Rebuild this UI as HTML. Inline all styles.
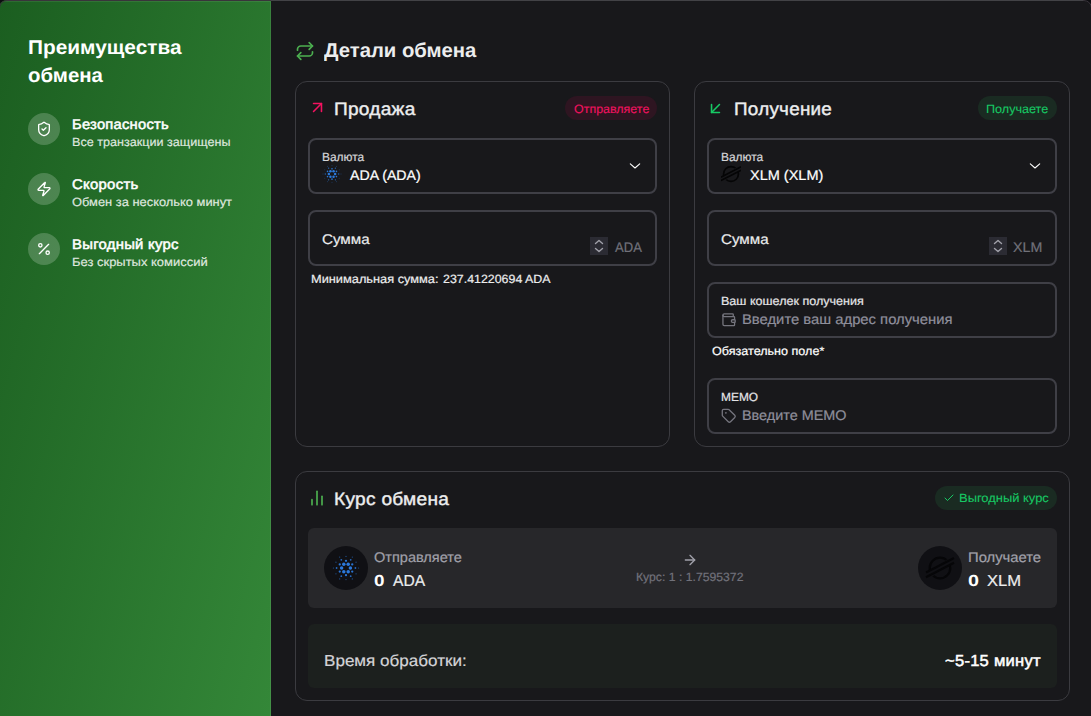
<!DOCTYPE html>
<html lang="ru">
<head>
<meta charset="utf-8">
<title>Детали обмена</title>
<style>
*{box-sizing:border-box;margin:0;padding:0}
html,body{width:1091px;height:716px;overflow:hidden;background:#0d0d10}
body{font-family:"Liberation Sans",sans-serif;color:#ecedee;position:relative;-webkit-font-smoothing:antialiased}
.abs{position:absolute}
.t{position:absolute;white-space:nowrap;line-height:1;transform-origin:0 0;text-rendering:geometricPrecision}
#frame{position:absolute;left:0;top:0;width:1091px;height:1000px;overflow:hidden;background:#18181b;clip-path:inset(0 -1px 0 -1px round 8px)}
#topline{position:absolute;left:-1px;top:0;width:1093px;height:1000px;border:1px solid #39343b;border-radius:8px;pointer-events:none}
#sidehl{position:absolute;left:0;top:1px;width:271px;height:1000px;border-top:1px solid rgba(255,255,255,.08);border-right:1px solid rgba(255,255,255,.07);pointer-events:none}
#mainline{position:absolute;left:271px;top:0;width:812px;height:1px;background:#424246}
#side{position:absolute;left:0;top:0;width:271px;height:1000px;background:linear-gradient(to bottom right,#1b5e20 0%,#388e3c 100%)}
.ic{position:absolute;width:32px;height:32px;border-radius:50%;background:rgba(255,255,255,.2)}
.ic svg{position:absolute;left:8px;top:8px;width:16px;height:16px}
.card{position:absolute;border:1px solid #3b3b40;border-radius:12px;background:#18181b}
.fld{position:absolute;border:2px solid #3f3f46;border-radius:8px;background:transparent}
.badge{position:absolute;height:24px;border-radius:12px}
.box{position:absolute;border-radius:6px}
.coin{position:absolute;width:44px;height:44px;border-radius:50%;background:#101014}
svg{display:block}
</style>
</head>
<body>
<div id="frame">
<div id="side">
  <div class="t" id="s_t1" style="left:28.36px;top:38.27px;font-size:20px;font-weight:700;color:#fff;transform:scaleX(1.0411)">Преимущества</div>
  <div class="t" id="s_t2" style="left:28.40px;top:66.07px;font-size:20px;font-weight:700;color:#fff;transform:scaleX(1.0207)">обмена</div>

  <div class="ic" style="left:28px;top:113px"><svg viewBox="0 0 24 24" fill="none" stroke="#fff" stroke-width="2" stroke-linecap="round" stroke-linejoin="round"><path d="M20 13c0 5-3.500 7.500-7.660 8.950a1 1 0 0 1-.670-.010C7.500 20.500 4 18 4 13V6a1 1 0 0 1 1-1c2 0 4.500-1.200 6.240-2.720a1.170 1.170 0 0 1 1.520 0C14.510 3.810 17 5 19 5a1 1 0 0 1 1 1z"/><path d="m9 12 2 2 4-4"/></svg></div>
  <div class="t" id="s_a1" style="left:72.40px;top:116.75px;font-size:14px;font-weight:400;letter-spacing:.25px;-webkit-text-stroke:0.5px #fff;color:#fff;transform:scaleX(1.0509)">Безопасность</div>
  <div class="t" id="s_a2" style="left:72.40px;top:135.84px;font-size:12px;color:rgba(255,255,255,.82);-webkit-text-stroke:0.2px currentColor;transform:scaleX(1.0497)">Все транзакции защищены</div>

  <div class="ic" style="left:28px;top:173px"><svg viewBox="0 0 24 24" fill="none" stroke="#fff" stroke-width="2" stroke-linecap="round" stroke-linejoin="round"><path d="M4 14a1 1 0 0 1-.780-1.630l9.900-10.200a.5.500 0 0 1 .860.460l-1.920 6.020A1 1 0 0 0 13 10h7a1 1 0 0 1 .780 1.630l-9.900 10.200a.5.500 0 0 1-.860-.460l1.920-6.020A1 1 0 0 0 11 14z"/></svg></div>
  <div class="t" id="s_b1" style="left:72.40px;top:176.75px;font-size:14px;font-weight:400;letter-spacing:.25px;-webkit-text-stroke:0.5px #fff;color:#fff;transform:scaleX(1.0649)">Скорость</div>
  <div class="t" id="s_b2" style="left:72.40px;top:195.84px;font-size:12px;color:rgba(255,255,255,.82);-webkit-text-stroke:0.2px currentColor;transform:scaleX(1.0728)">Обмен за несколько минут</div>

  <div class="ic" style="left:28px;top:233px"><svg viewBox="0 0 24 24" fill="none" stroke="#fff" stroke-width="2" stroke-linecap="round" stroke-linejoin="round"><line x1="19" y1="5" x2="5" y2="19"/><circle cx="6.500" cy="6.500" r="2.500"/><circle cx="17.500" cy="17.500" r="2.500"/></svg></div>
  <div class="t" id="s_c1" style="left:72.40px;top:236.75px;font-size:14px;font-weight:400;letter-spacing:.25px;-webkit-text-stroke:0.5px #fff;color:#fff;transform:scaleX(1.0624)">Выгодный курс</div>
  <div class="t" id="s_c2" style="left:72.40px;top:255.84px;font-size:12px;color:rgba(255,255,255,.82);-webkit-text-stroke:0.2px currentColor;transform:scaleX(1.0804)">Без скрытых комиссий</div>
</div>

<!-- header -->
<svg class="abs" style="left:295px;top:41px;width:20px;height:20px" viewBox="0 0 24 24" fill="none" stroke="#4caf50" stroke-width="2" stroke-linecap="round" stroke-linejoin="round"><path d="m17 2 4 4-4 4"/><path d="M3 11v-1a4 4 0 0 1 4-4h14"/><path d="m7 22-4-4 4-4"/><path d="M21 13v1a4 4 0 0 1-4 4H3"/></svg>
<div class="t" id="h_t" style="left:324.00px;top:40.57px;font-size:20px;font-weight:700;color:#ecedee;transform:scaleX(1.0143)">Детали обмена</div>

<!-- CARD 1 -->
<div class="card" style="left:295px;top:81px;width:375px;height:366px"></div>
<svg class="abs" style="left:307.75px;top:98.4px;width:19px;height:19px" viewBox="0 0 24 24" fill="none" stroke="#f31260" stroke-width="2" stroke-linecap="round" stroke-linejoin="round"><path d="M7 7h10v10"/><path d="M7 17 17 7"/></svg>
<div class="t" id="c1_t" style="left:334.42px;top:99.96px;font-size:18px;font-weight:400;letter-spacing:.25px;-webkit-text-stroke:0.4px #ecedee;color:#ecedee;transform:scaleX(1.0602)">Продажа</div>
<div class="badge" style="left:565px;top:96px;width:92px;background:#2e1521"></div>
<div class="t" id="c1_b" style="left:573.70px;top:102.74px;font-size:12px;color:#f31260;-webkit-text-stroke:0.1px currentColor;transform:scaleX(1.0375)">Отправляете</div>

<div class="fld" style="left:308px;top:138px;width:349px;height:56px"></div>
<div class="t" id="c1_l" style="left:322.30px;top:150.84px;font-size:12px;color:#d4d4d8;-webkit-text-stroke:0.2px currentColor;transform:scaleX(0.9942)">Валюта</div>
<svg class="abs" style="left:322px;top:164px;width:20px;height:20px" viewBox="0 0 20 20"><g fill="#2b79dc"><circle cx="13.15" cy="10.00" r="1.25" opacity="1.00"/><circle cx="11.57" cy="12.72" r="1.25" opacity="1.00"/><circle cx="8.43" cy="12.72" r="1.25" opacity="1.00"/><circle cx="6.85" cy="10.00" r="1.25" opacity="1.00"/><circle cx="8.43" cy="7.28" r="1.25" opacity="1.00"/><circle cx="11.57" cy="7.28" r="1.25" opacity="1.00"/><circle cx="14.46" cy="12.57" r="0.82" opacity="0.95"/><circle cx="10.00" cy="15.15" r="0.82" opacity="0.95"/><circle cx="5.54" cy="12.57" r="0.82" opacity="0.95"/><circle cx="5.54" cy="7.43" r="0.82" opacity="0.95"/><circle cx="10.00" cy="4.85" r="0.82" opacity="0.95"/><circle cx="14.46" cy="7.43" r="0.82" opacity="0.95"/><circle cx="16.72" cy="10.00" r="0.64" opacity="0.85"/><circle cx="13.36" cy="15.82" r="0.64" opacity="0.85"/><circle cx="6.64" cy="15.82" r="0.64" opacity="0.85"/><circle cx="3.28" cy="10.00" r="0.64" opacity="0.85"/><circle cx="6.64" cy="4.18" r="0.64" opacity="0.85"/><circle cx="13.36" cy="4.18" r="0.64" opacity="0.85"/><circle cx="19.01" cy="10.00" r="0.43" opacity="0.65"/><circle cx="14.50" cy="17.80" r="0.43" opacity="0.65"/><circle cx="5.50" cy="17.80" r="0.43" opacity="0.65"/><circle cx="0.99" cy="10.00" r="0.43" opacity="0.65"/><circle cx="5.50" cy="2.20" r="0.43" opacity="0.65"/><circle cx="14.50" cy="2.20" r="0.43" opacity="0.65"/><circle cx="17.18" cy="14.15" r="0.43" opacity="0.65"/><circle cx="10.00" cy="18.29" r="0.43" opacity="0.65"/><circle cx="2.82" cy="14.15" r="0.43" opacity="0.65"/><circle cx="2.82" cy="5.85" r="0.43" opacity="0.65"/><circle cx="10.00" cy="1.71" r="0.43" opacity="0.65"/><circle cx="17.18" cy="5.85" r="0.43" opacity="0.65"/></g></svg>
<div class="t" id="c1_v" style="left:350.00px;top:168.15px;font-size:14px;color:#fff;-webkit-text-stroke:0.2px currentColor;transform:scaleX(1.0098)">ADA (ADA)</div>
<svg class="abs" style="left:629px;top:160px;width:12px;height:12px" viewBox="0 0 12 12" fill="none" stroke="#fff" stroke-width="1.1" stroke-linecap="round" stroke-linejoin="round"><path d="M1.3 3.9 6 8 10.7 3.9"/></svg>

<div class="fld" style="left:308px;top:210px;width:349px;height:56px"></div>
<div class="t" id="c1_s" style="left:321.80px;top:232.35px;font-size:14px;color:#ecedee;-webkit-text-stroke:0.2px currentColor;transform:scaleX(1.0836)">Сумма</div>
<div class="abs" style="left:590px;top:237px;width:18px;height:18px;background:#2b2b33"></div>
<svg class="abs" style="left:590px;top:237px;width:18px;height:18px" viewBox="0 0 18 18" fill="none" stroke="#a1a1aa" stroke-width="1.400" stroke-linecap="round" stroke-linejoin="round"><path d="M5.500 6.500 9 3.500l3.500 3"/><path d="M5.500 11.500 9 14.500l3.500-3"/></svg>
<div class="t" id="c1_u" style="left:615.00px;top:240.25px;font-size:14px;color:#71717a;-webkit-text-stroke:0.2px currentColor;transform:scaleX(0.9320)">ADA</div>
<div class="t" id="c1_m" style="left:310.50px;top:272.84px;font-size:12px;color:#ecedee;-webkit-text-stroke:0.2px currentColor;transform:scaleX(1.0650)">Минимальная сумма:</div>
<div class="t" id="c1_m2" style="left:442.90px;top:272.84px;font-size:12px;color:#ecedee;-webkit-text-stroke:0.2px currentColor;transform:scaleX(1.0332)">237.41220694 ADA</div>

<!-- CARD 2 -->
<div class="card" style="left:694px;top:81px;width:376px;height:366px"></div>
<svg class="abs" style="left:706.35px;top:98.6px;width:19px;height:19px" viewBox="0 0 24 24" fill="none" stroke="#17c964" stroke-width="2" stroke-linecap="round" stroke-linejoin="round"><path d="M17 7 7 17"/><path d="M17 17H7V7"/></svg>
<div class="t" id="c2_t" style="left:733.52px;top:99.96px;font-size:18px;font-weight:400;letter-spacing:.25px;-webkit-text-stroke:0.4px #ecedee;color:#ecedee;transform:scaleX(1.0467)">Получение</div>
<div class="badge" style="left:978px;top:96px;width:79px;background:#1a2b22"></div>
<div class="t" id="c2_b" style="left:986.40px;top:102.74px;font-size:12px;color:#17c964;-webkit-text-stroke:0.1px currentColor;transform:scaleX(1.0494)">Получаете</div>

<div class="fld" style="left:707px;top:138px;width:350px;height:56px"></div>
<div class="t" id="c2_l" style="left:720.50px;top:150.84px;font-size:12px;color:#d4d4d8;-webkit-text-stroke:0.2px currentColor;transform:scaleX(0.9942)">Валюта</div>
<svg class="abs" style="left:721px;top:164px;width:20px;height:20px" viewBox="0 0 20 20"><g fill="none" stroke="#050506" stroke-width="1.70" stroke-linecap="butt"><clipPath id="u1007"><path d="M-2.08 14.17L22.08 -0.43L22.08 -4.40L-2.08 -4.40Z"/></clipPath><clipPath id="l1007"><path d="M-2.08 19.93L22.08 5.18L22.08 24.40L-2.08 24.40Z"/></clipPath><circle cx="10.00" cy="10.00" r="7.42" clip-path="url(#u1007)"/><circle cx="10.00" cy="10.00" r="7.42" clip-path="url(#l1007)"/><path d="M-0.08 13.17L20.08 2.87"/><path d="M-0.08 16.62L20.08 6.18"/></g></svg>
<div class="t" id="c2_v" style="left:749.50px;top:168.15px;font-size:14px;color:#fff;-webkit-text-stroke:0.2px currentColor;transform:scaleX(1.0354)">XLM (XLM)</div>
<svg class="abs" style="left:1029px;top:160px;width:12px;height:12px" viewBox="0 0 12 12" fill="none" stroke="#fff" stroke-width="1.1" stroke-linecap="round" stroke-linejoin="round"><path d="M1.3 3.9 6 8 10.7 3.9"/></svg>

<div class="fld" style="left:707px;top:210px;width:350px;height:56px"></div>
<div class="t" id="c2_s" style="left:721.10px;top:232.35px;font-size:14px;color:#ecedee;-webkit-text-stroke:0.2px currentColor;transform:scaleX(1.0836)">Сумма</div>
<div class="abs" style="left:989px;top:237px;width:18px;height:18px;background:#2b2b33"></div>
<svg class="abs" style="left:989px;top:237px;width:18px;height:18px" viewBox="0 0 18 18" fill="none" stroke="#a1a1aa" stroke-width="1.400" stroke-linecap="round" stroke-linejoin="round"><path d="M5.500 6.500 9 3.500l3.500 3"/><path d="M5.500 11.500 9 14.500l3.500-3"/></svg>
<div class="t" id="c2_u" style="left:1013.40px;top:240.25px;font-size:14px;color:#71717a;-webkit-text-stroke:0.2px currentColor;transform:scaleX(1.0169)">XLM</div>

<div class="fld" style="left:707px;top:282px;width:350px;height:56px"></div>
<div class="t" id="c2_wl" style="left:721.30px;top:295.14px;font-size:12px;color:#e4e4e7;-webkit-text-stroke:0.2px currentColor;transform:scaleX(1.0460)">Ваш кошелек получения</div>
<svg class="abs" style="left:721.3px;top:312.4px;width:15.5px;height:15.5px" viewBox="0 0 24 24" fill="none" stroke="#75757e" stroke-width="2" stroke-linecap="round" stroke-linejoin="round"><path d="M19 7V4a1 1 0 0 0-1-1H5a2 2 0 0 0 0 4h15a1 1 0 0 1 1 1v4h-3a2 2 0 0 0 0 4h3a1 1 0 0 0 1-1v-2a1 1 0 0 0-1-1"/><path d="M3 5v14a2 2 0 0 0 2 2h15a1 1 0 0 0 1-1v-4"/></svg>
<div class="t" id="c2_wp" style="left:741.94px;top:312.45px;font-size:14px;color:#8f8f9b;-webkit-text-stroke:0.2px currentColor;transform:scaleX(1.0574)">Введите ваш адрес получения</div>
<div class="t" id="c2_r" style="left:711.50px;top:344.84px;font-size:12px;color:#fff;-webkit-text-stroke:0.2px currentColor;transform:scaleX(1.0483)">Обязательно поле*</div>

<div class="fld" style="left:707px;top:378px;width:350px;height:56px"></div>
<div class="t" id="c2_ml" style="left:721.30px;top:391.14px;font-size:12px;color:#e4e4e7;-webkit-text-stroke:0.2px currentColor;transform:scaleX(0.9934)">MEMO</div>
<svg class="abs" style="left:721.3px;top:408.4px;width:15.5px;height:15.5px" viewBox="0 0 24 24" fill="none" stroke="#75757e" stroke-width="2" stroke-linecap="round" stroke-linejoin="round"><path d="M12.586 2.586A2 2 0 0 0 11.172 2H4a2 2 0 0 0-2 2v7.172a2 2 0 0 0 .586 1.414l8.704 8.704a2.426 2.426 0 0 0 3.420 0l6.580-6.580a2.426 2.426 0 0 0 0-3.420z"/><circle cx="7.500" cy="7.500" r=".5" fill="#75757e"/></svg>
<div class="t" id="c2_mp" style="left:741.97px;top:408.45px;font-size:14px;color:#8f8f9b;-webkit-text-stroke:0.2px currentColor;transform:scaleX(1.0284)">Введите MEMO</div>

<!-- CARD 3 -->
<div class="card" style="left:295px;top:471px;width:775px;height:230px"></div>
<svg class="abs" style="left:307px;top:488px;width:20px;height:20px" viewBox="0 0 24 24" fill="none" stroke="#4caf50" stroke-width="2" stroke-linecap="round" stroke-linejoin="round"><line x1="6" y1="20" x2="6" y2="14"/><line x1="12" y1="20" x2="12" y2="4"/><line x1="18" y1="20" x2="18" y2="10"/></svg>
<div class="t" id="c3_t" style="left:333.81px;top:489.76px;font-size:18px;font-weight:400;letter-spacing:.25px;-webkit-text-stroke:0.4px #ecedee;color:#ecedee;transform:scaleX(1.0639)">Курс обмена</div>
<div class="badge" style="left:935px;top:486px;width:122px;background:#1a2b22"></div>
<svg class="abs" style="left:943px;top:492px;width:12px;height:12px" viewBox="0 0 24 24" fill="none" stroke="#17c964" stroke-width="2" stroke-linecap="round" stroke-linejoin="round"><path d="M20 6 9 17l-5-5"/></svg>
<div class="t" id="c3_b" style="left:959.30px;top:492.34px;font-size:12px;color:#17c964;-webkit-text-stroke:0.1px currentColor;transform:scaleX(1.0776)">Выгодный курс</div>

<div class="box" style="left:308px;top:528px;width:749px;height:80px;background:#27272a"></div>
<div class="coin" style="left:324px;top:546px"></div>
<svg class="abs" style="left:324px;top:546px;width:44px;height:44px" viewBox="0 0 44 44"><g fill="#2b79dc"><circle cx="26.40" cy="22.00" r="1.75" opacity="1.00"/><circle cx="24.20" cy="25.81" r="1.75" opacity="1.00"/><circle cx="19.80" cy="25.81" r="1.75" opacity="1.00"/><circle cx="17.60" cy="22.00" r="1.75" opacity="1.00"/><circle cx="19.80" cy="18.19" r="1.75" opacity="1.00"/><circle cx="24.20" cy="18.19" r="1.75" opacity="1.00"/><circle cx="28.24" cy="25.60" r="1.15" opacity="0.95"/><circle cx="22.00" cy="29.20" r="1.15" opacity="0.95"/><circle cx="15.76" cy="25.60" r="1.15" opacity="0.95"/><circle cx="15.76" cy="18.40" r="1.15" opacity="0.95"/><circle cx="22.00" cy="14.80" r="1.15" opacity="0.95"/><circle cx="28.24" cy="18.40" r="1.15" opacity="0.95"/><circle cx="31.40" cy="22.00" r="0.90" opacity="0.85"/><circle cx="26.70" cy="30.14" r="0.90" opacity="0.85"/><circle cx="17.30" cy="30.14" r="0.90" opacity="0.85"/><circle cx="12.60" cy="22.00" r="0.90" opacity="0.85"/><circle cx="17.30" cy="13.86" r="0.90" opacity="0.85"/><circle cx="26.70" cy="13.86" r="0.90" opacity="0.85"/><circle cx="34.60" cy="22.00" r="0.60" opacity="0.65"/><circle cx="28.30" cy="32.91" r="0.60" opacity="0.65"/><circle cx="15.70" cy="32.91" r="0.60" opacity="0.65"/><circle cx="9.40" cy="22.00" r="0.60" opacity="0.65"/><circle cx="15.70" cy="11.09" r="0.60" opacity="0.65"/><circle cx="28.30" cy="11.09" r="0.60" opacity="0.65"/><circle cx="32.05" cy="27.80" r="0.60" opacity="0.65"/><circle cx="22.00" cy="33.60" r="0.60" opacity="0.65"/><circle cx="11.95" cy="27.80" r="0.60" opacity="0.65"/><circle cx="11.95" cy="16.20" r="0.60" opacity="0.65"/><circle cx="22.00" cy="10.40" r="0.60" opacity="0.65"/><circle cx="32.05" cy="16.20" r="0.60" opacity="0.65"/></g></svg>
<div class="t" id="c3_sl" style="left:374.20px;top:550.45px;font-size:14px;color:#a1a1aa;-webkit-text-stroke:0.2px currentColor;transform:scaleX(1.0376)">Отправляете</div>
<div class="t" id="c3_s0" style="left:373.90px;top:574.06px;font-size:16px;font-weight:700;color:#fff;transform:scaleX(1.1783)">0</div>
<div class="t" id="c3_sa" style="left:392.50px;top:574.06px;font-size:16px;color:#ecedee;-webkit-text-stroke:0.2px currentColor;transform:scaleX(0.9746)">ADA</div>

<svg class="abs" style="left:682px;top:552px;width:16px;height:16px" viewBox="0 0 24 24" fill="none" stroke="#a1a1aa" stroke-width="2" stroke-linecap="round" stroke-linejoin="round"><path d="M5 12h14"/><path d="m12 5 7 7-7 7"/></svg>
<div class="t" id="c3_r" style="left:636.40px;top:570.84px;font-size:12px;color:#71717a;-webkit-text-stroke:0.2px currentColor;transform:scaleX(1.0175)">Курс: 1 : 1.7595372</div>

<div class="coin" style="left:918px;top:546px"></div>
<svg class="abs" style="left:918px;top:546px;width:44px;height:44px" viewBox="0 0 44 44"><g fill="none" stroke="#060608" stroke-width="2.30" stroke-linecap="butt"><clipPath id="u2210"><path d="M6.00 27.40L38.00 7.90L38.00 2.00L6.00 2.00Z"/></clipPath><clipPath id="l2210"><path d="M6.00 35.40L38.00 15.70L38.00 42.00L6.00 42.00Z"/></clipPath><circle cx="22.00" cy="22.00" r="10.30" clip-path="url(#u2210)"/><circle cx="22.00" cy="22.00" r="10.30" clip-path="url(#l2210)"/><path d="M8.00 26.40L36.00 12.10"/><path d="M8.00 31.20L36.00 16.70"/></g></svg>
<div class="t" id="c3_rl" style="left:967.65px;top:550.45px;font-size:14px;color:#a1a1aa;-webkit-text-stroke:0.2px currentColor;transform:scaleX(1.0566)">Получаете</div>
<div class="t" id="c3_r0" style="left:967.90px;top:574.06px;font-size:16px;font-weight:700;color:#fff;transform:scaleX(1.2326)">0</div>
<div class="t" id="c3_rx" style="left:987.00px;top:574.06px;font-size:16px;color:#ecedee;-webkit-text-stroke:0.2px currentColor;transform:scaleX(1.0367)">XLM</div>

<div class="box" style="left:308px;top:624px;width:749px;height:64px;background:#1c201e;border-radius:6px"></div>
<div class="t" id="c3_pl" style="left:324.12px;top:654.26px;font-size:16px;color:#d4d4d8;-webkit-text-stroke:0.2px currentColor;transform:scaleX(1.0667)">Время обработки:</div>
<div class="t" id="c3_pv" style="left:944.50px;top:654.46px;font-size:16px;font-weight:400;letter-spacing:.25px;-webkit-text-stroke:0.5px #fff;color:#fff;transform:scaleX(1.0344)">~5-15 минут</div>
<div id="sidehl"></div>
<div id="topline"></div>
<div id="mainline"></div>
</div>
</body>
</html>
